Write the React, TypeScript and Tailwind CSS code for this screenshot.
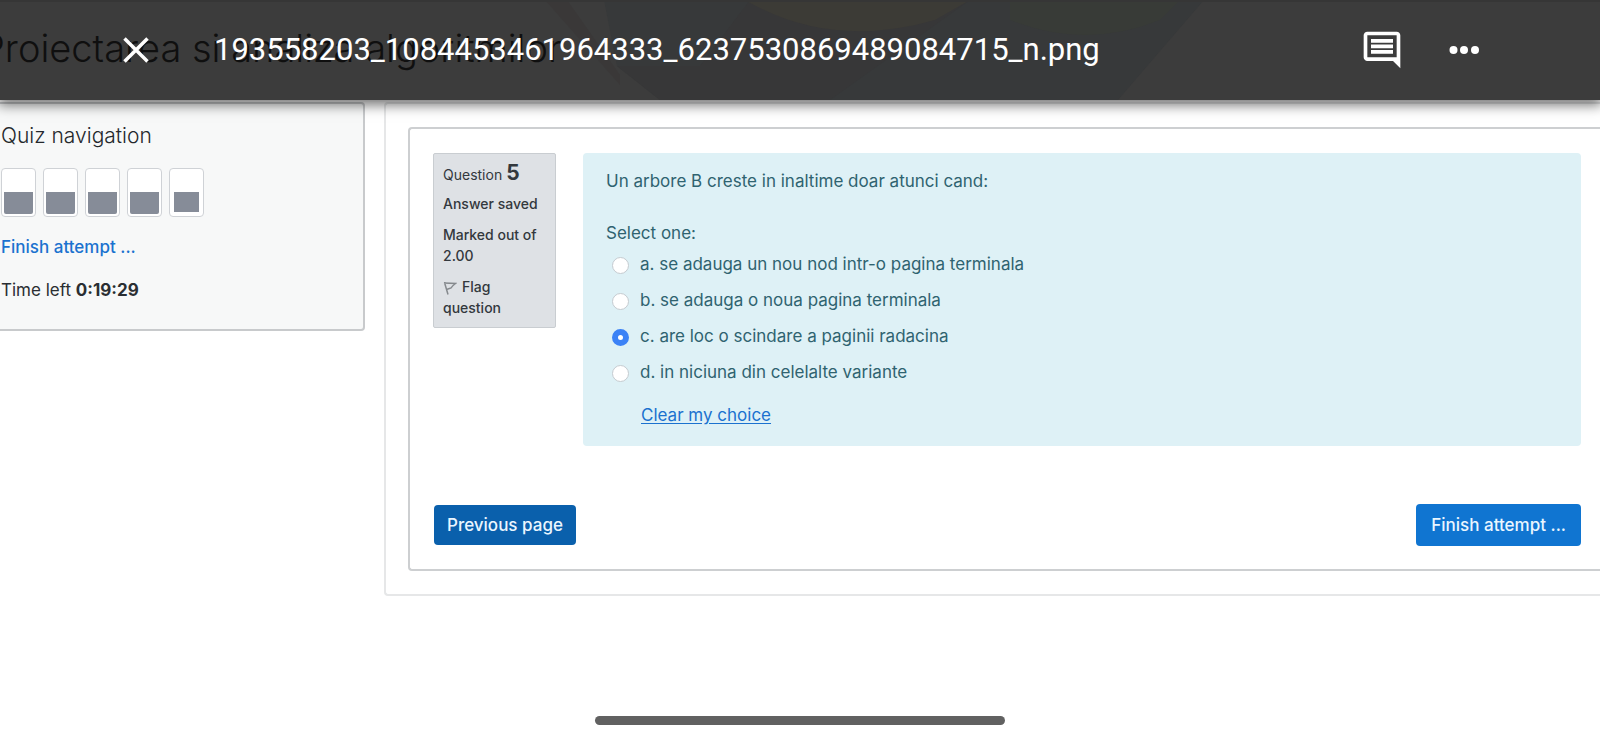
import { useState } from 'react';

const options = [
  'a. se adauga un nou nod intr-o pagina terminala',
  'b. se adauga o noua pagina terminala',
  'c. are loc o scindare a paginii radacina',
  'd. in niciuna din celelalte variante',
];

function ViewerBar() {
  return (
    <header className="relative z-10 h-[100px] overflow-visible bg-[#3c3c3c] shadow-[0_3px_12px_2px_rgba(0,0,0,0.55)]">
      <svg
        className="absolute inset-0 h-full w-full"
        viewBox="0 0 1600 100"
        preserveAspectRatio="none"
        aria-hidden="true"
      >
        <path d="M604 0h600l-86 100H660L617 66z" fill="#37393a" />
        <path d="M617 66L660 100H830L970 0H750L700 66z" fill="#373738" />
        <path d="M745 0H970L935 20Q830 50 745 0z" fill="#3c3b36" />
        <path d="M1010 0h170l-20 20q-75 30-150 0z" fill="#383b37" />
        <path d="M545 0h22l53 75v10z" fill="#3a3838" />
        <path d="M0 0h1600v2H0z" fill="#363636" />
      </svg>
      <p className="absolute top-5 -left-[19px] text-[38px] leading-[56px] font-light whitespace-nowrap text-[#0f0f0f]">
        Proiectarea si analiza algoritmilor
      </p>
      <div className="relative flex h-full items-center pr-[114px] pl-[120px] text-white">
        <button type="button" aria-label="Close" className="flex size-8 items-center justify-center">
          <svg viewBox="0 0 32 32" className="size-8" stroke="currentColor" strokeWidth="3.500" fill="none">
            <path d="M4.500 4.500L27.500 27.500M27.500 4.500L4.500 27.500" />
          </svg>
        </button>
        <h1 className="ml-[62px] flex-1 font-[Roboto,sans-serif] text-[31px] leading-10 whitespace-nowrap">
          193558203_1084453461964333_6237530869489084715_n.png
        </h1>
        <button type="button" aria-label="Comments" className="flex size-11 items-center justify-center">
          <svg viewBox="0 0 24 24" className="size-11" fill="currentColor">
            <path d="M21.990 4c0-1.100-.890-2-1.990-2H4c-1.100 0-2 .900-2 2v12c0 1.100.900 2 2 2h14l4 4-.010-18zM20 4v12H4V4h16zM6 12h12v2H6v-2zm0-3h12v2H6V9zm0-3h12v2H6V6z" />
          </svg>
        </button>
        <button type="button" aria-label="More" className="ml-[38px] flex size-11 items-center justify-center">
          <svg viewBox="0 0 44 44" className="size-11" fill="currentColor">
            <circle cx="11.500" cy="22" r="4" />
            <circle cx="22" cy="22" r="4" />
            <circle cx="33" cy="22" r="4" />
          </svg>
        </button>
      </div>
    </header>
  );
}

function QuizNavigation() {
  return (
    <aside className="mt-[2px] w-[365px] shrink-0 rounded-r border-2 border-l-0 border-[#c8cacc] bg-[#f7f8f8] pt-4 pb-[27px]">
      <h2 className="pl-[1px] text-[21px] leading-8 font-light text-[#24282c]">Quiz navigation</h2>
      <nav className="mt-4 flex gap-[7px] pl-[1px]" aria-label="Questions">
        {[1, 2, 3, 4, 5].map((n) => (
          <a
            key={n}
            href={`#question-${n}`}
            aria-label={`Question ${n}`}
            className={
              n === 5
                ? 'flex h-[49px] w-[35px] items-end rounded border border-[#cfd2d6] bg-white p-1'
                : 'flex h-[49px] w-[35px] items-end rounded border border-[#cfd2d6] bg-white p-[2px]'
            }
          >
            <span className={n === 5 ? 'h-5 w-full bg-[#868c98]' : 'h-[22px] w-full rounded-b-[2px] bg-[#868c98]'} />
          </a>
        ))}
      </nav>
      <a href="#finish" className="mt-[18px] block pl-[1px] text-[17px] leading-6 font-medium text-[#1b72cf]">
        Finish attempt ...
      </a>
      <p className="mt-[19px] pl-[1px] text-[17px] leading-6 text-[#2a2e32]">
        Time left <b className="font-bold">0:19:29</b>
      </p>
    </aside>
  );
}

function QuestionInfo() {
  return (
    <section className="flex w-[123px] shrink-0 flex-col gap-[10px] rounded-[2px] border border-[#c9cdd1] bg-[#dee1e5] px-[9px] pt-[11px] pb-[9px] text-[14px] leading-[21px] font-medium text-[#33383d]">
      <h3 className="flex items-baseline gap-1 leading-4">
        <span className="font-normal">Question</span>
        <b className="text-[21px] font-bold">5</b>
      </h3>
      <p>Answer saved</p>
      <p>Marked out of 2.00</p>
      <button type="button" className="text-left">
        <svg viewBox="0 0 14 14" className="mr-[5px] inline size-[14px]" fill="none" stroke="#85898d" strokeWidth="1.500">
          <path d="M1.500 1.500L5 13.500M1 2L12.500 2.500Q9 5 8 7L3.500 8.500" />
        </svg>
        Flag question
      </button>
    </section>
  );
}

function QuestionBody() {
  const [selected, setSelected] = useState<number | null>(2);
  return (
    <form className="flex-1 rounded bg-[#def1f6] px-[23px] pt-4 pb-[19px] text-[17px] leading-6 text-[#2f6370]">
      <p>Un arbore B creste in inaltime doar atunci cand:</p>
      <fieldset className="mt-7">
        <legend>Select one:</legend>
        <div className="mt-[7px] flex flex-col gap-3">
          {options.map((option, i) => (
            <label key={option} className="flex items-center gap-[11px] pl-[6px]">
              <input
                type="radio"
                name="answer"
                checked={selected === i}
                onChange={() => setSelected(i)}
                className="mt-[2px] size-[17px] appearance-none rounded-full border border-[#c5cbd0] bg-white checked:border-[6px] checked:border-[#3b82f6]"
              />
              {option}
            </label>
          ))}
        </div>
      </fieldset>
      <button
        type="button"
        onClick={() => setSelected(null)}
        className="mt-[19px] ml-[35px] block text-[#1b72cf] underline underline-offset-2"
      >
        Clear my choice
      </button>
    </form>
  );
}

export default function App() {
  return (
    <div className="flex min-h-screen flex-col overflow-x-hidden bg-white font-[Inter,sans-serif]">
      <ViewerBar />
      <div className="flex items-start gap-[19px]">
        <QuizNavigation />
        <main className="mt-[2px] flex-1 rounded-l border-2 border-r-0 border-[#e6e7e8] py-[23px] pl-[22px]">
          <div className="rounded-l border-2 border-r-0 border-[#cdcfd1] pt-6 pr-[19px] pb-[23px] pl-[23px]">
            <div className="flex items-start gap-[27px]">
              <QuestionInfo />
              <QuestionBody />
            </div>
            <div className="mt-[58px] flex items-center justify-between pl-[1px] text-[17px] leading-6 font-medium text-[#eaf6ff]">
              <button type="button" className="rounded bg-[#0a60ac] px-[13px] py-2">
                Previous page
              </button>
              <button type="button" className="rounded bg-[#1075d1] px-[15px] py-[9px]">
                Finish attempt ...
              </button>
            </div>
          </div>
        </main>
      </div>
      <div className="mx-auto mt-auto mb-[14px] h-[9px] w-[410px] rounded-full bg-[#616161]" />
    </div>
  );
}
